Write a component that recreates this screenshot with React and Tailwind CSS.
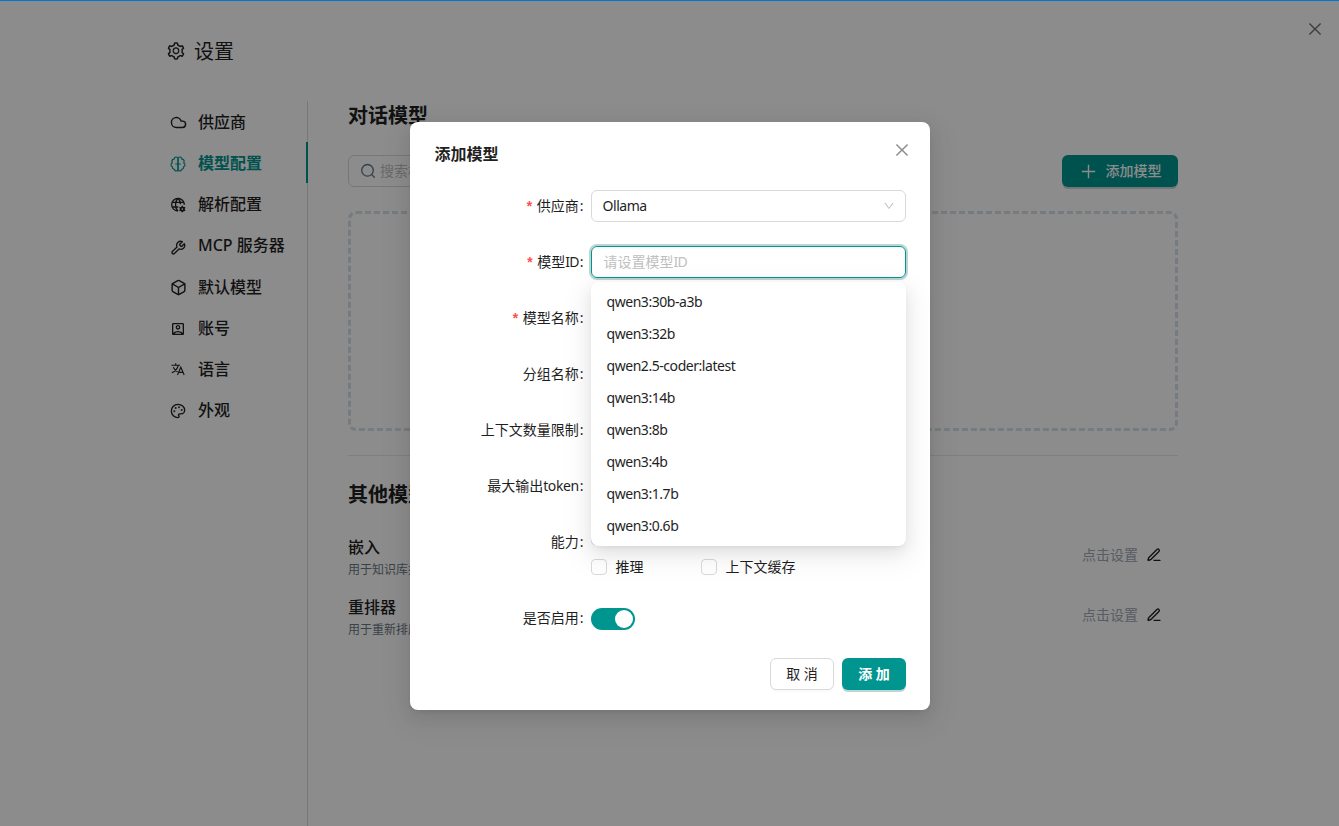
import React from 'react';
import { LuPenLine, LuCloud, LuWrench, LuPalette, LuBox } from 'react-icons/lu';
import { MdOutlineAccountBox } from 'react-icons/md';
import { AiOutlineClose, AiOutlinePlus, AiOutlineDown, AiOutlineSetting } from 'react-icons/ai';

const GlobeCog = () => (
  <svg viewBox="0 0 24 24" width="16" height="16" fill="none" stroke="currentColor" strokeWidth="2">
    <path d="M12 21A9.500 9.500 0 1 1 21.500 11.500M12 2c-5 5-5 14 0 19M12 2c2.500 2.500 3.700 6 3.800 9M3.500 8h17M3.500 15h9" />
    <circle cx="18.500" cy="18" r="2.600" strokeWidth="2.600" />
    <path d="M18.500 13v2M18.500 21v2M14.200 15.500l1.700 1M21.100 19.500l1.700 1M14.200 20.500l1.700-1M21.100 16.500l1.700-1" />
  </svg>
);

const Brain = () => (
  <svg viewBox="0 0 24 24" width="16" height="16" fill="none" stroke="currentColor" strokeWidth="1.8" strokeLinecap="round" strokeLinejoin="round">
    <path d="M12 4.500C12 2.800 10.800 1.500 9.200 1.500S6.300 2.800 6.200 4.600C4 4.800 2.600 6.300 2.800 8.600c.1.700.3 1.300.7 1.800C2 11 1.300 12 1.500 13.400c.1 1.300.9 2.300 2.100 2.700-.3 2.100.9 3.600 2.900 3.800.4 1.500 1.400 2.600 2.800 2.600 1.600 0 2.700-1.300 2.700-3z" />
    <path d="M12 4.500C12 2.800 13.200 1.500 14.800 1.500s2.900 1.300 3 3.100c2.200.2 3.600 1.700 3.400 4-.1.700-.3 1.300-.7 1.800 1.500.6 2.200 1.600 2 3-.1 1.300-.9 2.300-2.100 2.700.3 2.100-.9 3.600-2.900 3.800-.4 1.500-1.400 2.600-2.800 2.600-1.600 0-2.700-1.300-2.700-3z" />
    <path d="M8.500 12h7" />
  </svg>
);

const Translate = () => (
  <svg viewBox="0 0 16 16" width="16" height="16" fill="none" stroke="currentColor" strokeWidth="1.1">
    <path d="M1.500 4.200h8.500M5.700 2.200v2M8.300 4.200C7.700 7.300 5 10.500 1.800 11.800M3.300 6.200c.8 2 2.300 3.700 4.300 4.800" />
    <path d="M7.500 14l3.300-7.800L14.200 14M8.700 11.400h4.300" />
  </svg>
);

const Search = () => (
  <svg viewBox="0 0 16 16" width="16" height="16" fill="none" stroke="#64748b" strokeWidth="1.3" strokeLinecap="round">
    <circle cx="7.500" cy="7.300" r="5.800" />
    <path d="M11.800 11.600l2.500 2.600" />
  </svg>
);

const menu = [
  { label: '供应商', icon: <LuCloud size={17} /> },
  { label: '模型配置', icon: <Brain />, active: true },
  { label: '解析配置', icon: <GlobeCog /> },
  { label: 'MCP 服务器', icon: <LuWrench size={16} className="mt-1" /> },
  { label: '默认模型', icon: <LuBox size={17} /> },
  { label: '账号', icon: <MdOutlineAccountBox size={16} className="mt-px" /> },
  { label: '语言', icon: <Translate /> },
  { label: '外观', icon: <LuPalette size={16} className="mt-px" /> },
];

const models = [
  'qwen3:30b-a3b',
  'qwen3:32b',
  'qwen2.5-coder:latest',
  'qwen3:14b',
  'qwen3:8b',
  'qwen3:4b',
  'qwen3:1.7b',
  'qwen3:0.6b',
];

const others = [
  { name: '嵌入', desc: '用于知识库搜索的嵌入模型' },
  { name: '重排器', desc: '用于重新排序搜索结果的模型' },
];

function Field({ label, required, children }) {
  return (
    <div className="mb-6 flex">
      <div className="flex h-8 w-[157px] shrink-0 items-center justify-end pr-[7px]">
        {required && <span className="mt-1 mr-[3px] font-['Liberation_Mono'] font-bold text-[#ff4d4f]">*</span>}
        <span>{label}</span>
        <span className="ml-px">:</span>
      </div>
      <div className="relative flex-1">{children}</div>
    </div>
  );
}

function Check({ children }) {
  return (
    <label className="flex h-[22px] w-[110px] items-center gap-2 whitespace-nowrap">
      <span className="mr-px size-4 shrink-0 rounded border border-[#d9d9d9] bg-white" />
      {children}
    </label>
  );
}

function Sidebar() {
  return (
    <nav className="w-[142px] shrink-0 border-r border-[#d9d9d9]">
      {menu.map(item => (
        <div
          key={item.label}
          className={`-mr-px flex items-center pt-[9px] pb-[7px] pl-1 text-base leading-[25.14px] ${
            item.active ? 'border-r-2 border-[#00968f] font-semibold text-[#00968f]' : 'font-medium'
          }`}
        >
          <span className="mr-3 flex size-4 shrink-0 items-center justify-center *:shrink-0">{item.icon}</span>
          <span className="whitespace-nowrap">{item.label}</span>
        </div>
      ))}
    </nav>
  );
}

function Settings() {
  return (
    <div className="flex h-full flex-col pl-[166px]">
      <div className="flex h-[101px] shrink-0 items-center gap-2 pt-0.5 text-xl">
        <AiOutlineSetting size={20} className="mb-0.5" />
        <h1>设置</h1>
      </div>
      <div className="flex flex-1">
        <Sidebar />
        <main className="ml-10 w-[830px]">
          <h2 className="h-[54px] text-xl leading-[30px] font-bold">对话模型</h2>
          <div className="flex justify-between">
            <div className="flex h-8 w-64 items-center gap-1 rounded-md border border-[#d9d9d9] pl-[11px] text-[#bfbfbf]">
              <Search />
              <span>搜索模型</span>
            </div>
            <button className="flex h-8 w-[116px] items-center justify-center gap-2 rounded-md bg-[#00968f] font-medium text-white shadow-[0_2px_0_#cbd5db]">
              <AiOutlinePlus size={19} />
              添加模型
            </button>
          </div>
          <div className="mt-6 h-[220px] rounded-lg border-3 border-dashed border-[#d5e0e8]" />
          <hr className="mt-6 border-[#e5e7eb]" />
          <h2 className="mt-6 mb-[18px] text-xl leading-[30px] font-bold">其他模型</h2>
          {others.map(item => (
            <div key={item.name} className="mb-1 flex h-14 items-center justify-between pr-4">
              <div className="pt-px">
                <div className="text-base leading-[25px] font-medium">{item.name}</div>
                <div className="text-xs leading-[19px] text-[#6b7885]">{item.desc}</div>
              </div>
              <div className="flex items-center gap-2 pb-0.5">
                <span className="text-[#a0a8b4]">点击设置</span>
                <LuPenLine size={16} />
              </div>
            </div>
          ))}
        </main>
      </div>
    </div>
  );
}

function ModelDialog() {
  return (
    <div className="h-[588px] w-[520px] rounded-lg bg-white px-6 pt-5 shadow-[0_6px_16px_rgba(0,0,0,0.08),0_3px_6px_-4px_rgba(0,0,0,0.12),0_9px_28px_8px_rgba(0,0,0,0.05)]">
      <div className="mb-6 flex h-6 items-center justify-between">
        <h3 className="pl-px text-base font-semibold">添加模型</h3>
        <AiOutlineClose size={18} className="-mr-[5px] mb-2 text-[#8c8c8c]" />
      </div>
      <Field label="供应商" required>
        <div className="flex h-8 items-center justify-between rounded-md border border-[#d9d9d9] pr-2.5 pl-[11px] tracking-[-0.45px]">
          Ollama
          <AiOutlineDown size={12} className="text-[#bfbfbf]" />
        </div>
      </Field>
      <Field label={<>模型<span className="tracking-[-0.7px]">ID</span></>} required>
        <div className="flex h-8 items-center rounded-md border border-[#00968f] px-3 text-[#bfbfbf] shadow-[0_0_0_2px_#bcd6d3]">
          <span>请设置模型<span className="tracking-[-0.7px]">ID</span></span>
        </div>
        <div className="absolute top-9 left-0 z-10 w-full rounded-lg bg-white p-1 shadow-[0_6px_16px_rgba(0,0,0,0.08),0_3px_6px_-4px_rgba(0,0,0,0.12),0_9px_28px_8px_rgba(0,0,0,0.05)]">
          {models.map(m => (
            <div key={m} className="h-8 px-3 leading-8 tracking-[-0.45px]">{m}</div>
          ))}
        </div>
      </Field>
      <Field label="模型名称" required>
        <div className="h-8 rounded-md border border-[#d9d9d9]" />
      </Field>
      <Field label="分组名称">
        <div className="h-8 rounded-md border border-[#d9d9d9]" />
      </Field>
      <Field label="上下文数量限制">
        <div className="h-8 rounded-md border border-[#d9d9d9]" />
      </Field>
      <Field label={<>最大输出<span className="tracking-[-0.4px]">token</span></>}>
        <div className="h-8 rounded-md border border-[#d9d9d9]" />
      </Field>
      <Field label="能力">
        <div className="flex flex-wrap gap-y-2">
          <Check />
          <Check />
          <Check>推理</Check>
          <Check>上下文缓存</Check>
        </div>
      </Field>
      <Field label="是否启用">
        <div className="mt-1.5 flex h-[22px] w-11 items-center justify-end rounded-full bg-[#00968f] pr-0.5">
          <span className="size-[18px] rounded-full bg-white" />
        </div>
      </Field>
      <div className="flex justify-end gap-2">
        <button className="h-8 w-16 rounded-md border border-[#d9d9d9] bg-white pl-px shadow-[0_2px_0_rgba(0,0,0,0.02)]">取 消</button>
        <button className="h-8 w-16 rounded-md bg-[#00968f] pl-px font-semibold text-white shadow-[0_2px_0_#bcd6d3]">添 加</button>
      </div>
    </div>
  );
}

export default function App() {
  return (
    <div className="relative h-[826px] w-[1339px] overflow-hidden bg-white font-['Noto_Sans','Noto_Sans_CJK_SC',sans-serif] text-sm leading-[22px] text-[#1f1f1f]">
      <Settings />
      <AiOutlineClose size={18} className="absolute top-5 right-[15px] text-[#737373]" />
      <div className="absolute inset-0 flex justify-center bg-black/45 pt-[122px]">
        <ModelDialog />
      </div>
      <div className="absolute inset-x-0 top-0 h-px bg-[#0078d4]" />
    </div>
  );
}
